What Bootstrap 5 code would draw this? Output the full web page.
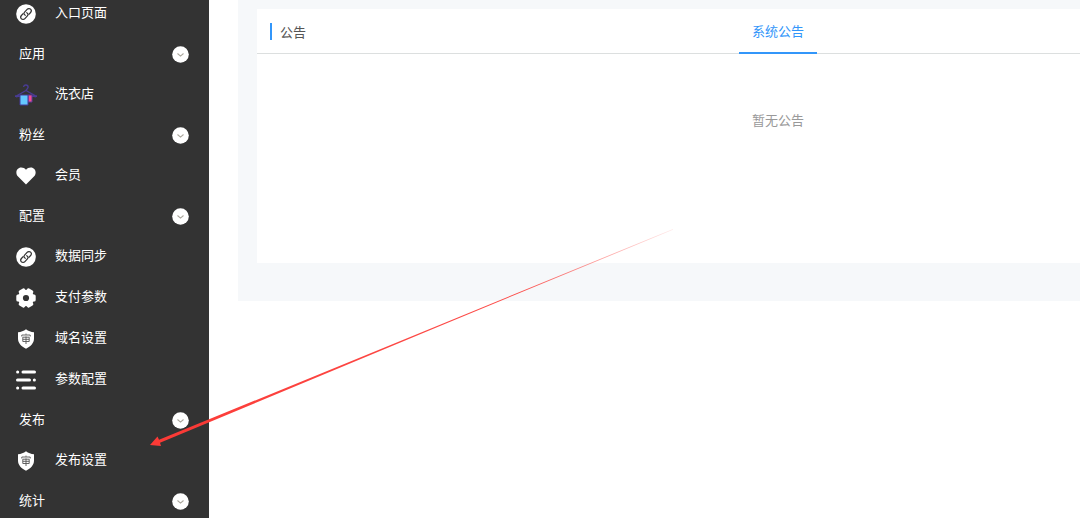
<!DOCTYPE html>
<html lang="zh-CN">
<head>
<meta charset="utf-8">
<meta name="viewport" content="width=device-width, initial-scale=1">
<title>系统公告</title>
<link rel="stylesheet" href="https://cdn.jsdelivr.net/npm/bootstrap@5.3.0/dist/css/bootstrap.min.css">
<style>
body { font: 13px/20px "Noto Sans CJK SC", sans-serif; color: #555; background: #fff; }
.side { width: 209px; background: #333; }
.side-menu { margin-top: -7px; }
.side-item { height: 41px; padding: 0 15px; gap: 18px; color: #fff; }
.side-item span { padding-bottom: 4px; }
.side-item:hover { color: #fff; }
.side-group { height: 40px; padding: 0 20px 0 19px; color: #fff; }
.side-group span { padding-bottom: 2px; }
.ico { width: 22px; height: 22px; flex: none; }
.ico-sm { width: 17px; height: 17px; flex: none; }
.panel { min-width: 1080px; margin-left: 29px; padding: 9px 19px 38px; background: #f6f8fa; }
.board { height: 254px; }
.board-head { height: 45px; border-bottom: 1px solid #dcdfdf; }
.board-title { left: 13px; padding-left: 8px; border-left: 2px solid #3296fa; line-height: 17px; }
.board-tab { height: 45px; padding: 0 13px; color: #3296fa; border-bottom: 2px solid #3296fa; }
.board-empty { padding-top: 56px; color: #999; }
.pointer { left: 140px; top: 220px; pointer-events: none; }
</style>
</head>
<body>
<svg class="d-none" aria-hidden="true">
  <symbol id="link" viewBox="0 0 22 22"><circle cx="11" cy="11" r="9.8" fill="#fff"/><g fill="none" stroke="#333" stroke-width="1.2" stroke-linecap="round"><path d="M10.300 12.300c-1.500-.6-1.700-2-.7-3.100l2.500-2.800c1-1.100 2.600-1.100 3.500-.2s.9 2.300 0 3.300l-1.700 1.900"/><path d="M11.700 9.700c1.500.6 1.700 2 .7 3.100l-2.500 2.800c-1 1.100-2.600 1.100-3.500.2s-.9-2.300 0-3.300l1.700-1.900"/></g></symbol>
  <symbol id="down" viewBox="0 0 17 17"><circle cx="8.5" cy="8.5" r="8.3" fill="#fff"/><path d="M5.5 7.5l3 2.600 3-2.600" fill="none" stroke="#aaa69c" stroke-width="1.1"/></symbol>
  <symbol id="hanger" viewBox="0 0 22 22"><path d="M8.600 3.100c0-3 4.800-2.700 4.500.2-.2 1.800-2.100 1.600-2.100 3.700M11 6.500L1 12.200h20L11 6.500M.2 11.500l2.200 1.800M21.800 11.500l-2.200 1.800" fill="none" stroke="#493c94" stroke-width="1.400"/><path d="M13 11h4v7h-4z" fill="#f94c91" stroke="#5a3b98"/><path d="M5 11h8v10H5z" fill="#65c8ff" stroke="#463b9b"/></symbol>
  <symbol id="heart" viewBox="0 0 22 22"><path d="M11 19.500L2.800 11.300C-.2 7.700 1.800 2.500 6.200 2.500c2 0 3.600.8 4.800 2.300 1.200-1.500 2.800-2.300 4.800-2.300 4.400 0 6.400 5.200 3.400 8.800z" fill="#fff"/></symbol>
  <symbol id="gear" viewBox="0 0 22 22"><g fill="#fff"><circle cx="11" cy="11" r="8.200"/><rect x="1.300" y="7.500" width="19.400" height="7" rx="1.500"/><rect x="1.300" y="7.500" width="19.400" height="7" rx="1.500" transform="rotate(60 11 11)"/><rect x="1.300" y="7.500" width="19.400" height="7" rx="1.500" transform="rotate(120 11 11)"/></g><circle cx="11" cy="11" r="3.100" fill="#333"/></symbol>
  <symbol id="shield" viewBox="0 0 22 22"><path d="M11 1.200c2.300 1.800 5.100 2.800 8 3v6.300c0 4.500-3.200 7.800-8 10.300-4.800-2.500-8-5.800-8-10.300V4.200c2.900-.2 5.700-1.200 8-3z" fill="#fff"/><path d="M11 5.600v1.200M6.800 8.500V7h8.400v1.500M7.800 9.200h6.400v4.300H7.800zM7.800 11.300h6.400M11 8.500v7.500" fill="none" stroke="#555" stroke-width=".9"/></symbol>
  <symbol id="list" viewBox="0 0 22 22"><g stroke="#fff" stroke-width="3" stroke-linecap="round"><path d="M2.600 3h.1M8 3h11.500M2.500 11h12M19.300 11h.1M2.600 19h.1M8 19h11.500"/></g></symbol>
</svg>
<div class="d-flex vh-100 overflow-hidden position-relative">
  <aside class="side flex-shrink-0 overflow-hidden">
    <nav class="side-menu d-flex flex-column">
      <a href="#" class="side-item d-flex align-items-center text-decoration-none"><svg class="ico"><use href="#link"/></svg><span>入口页面</span></a>
      <button type="button" class="side-group d-flex align-items-center justify-content-between border-0 bg-transparent"><span>应用</span><svg class="ico-sm"><use href="#down"/></svg></button>
      <a href="#" class="side-item d-flex align-items-center text-decoration-none"><svg class="ico"><use href="#hanger"/></svg><span>洗衣店</span></a>
      <button type="button" class="side-group d-flex align-items-center justify-content-between border-0 bg-transparent"><span>粉丝</span><svg class="ico-sm"><use href="#down"/></svg></button>
      <a href="#" class="side-item d-flex align-items-center text-decoration-none"><svg class="ico"><use href="#heart"/></svg><span>会员</span></a>
      <button type="button" class="side-group d-flex align-items-center justify-content-between border-0 bg-transparent"><span>配置</span><svg class="ico-sm"><use href="#down"/></svg></button>
      <a href="#" class="side-item d-flex align-items-center text-decoration-none"><svg class="ico"><use href="#link"/></svg><span>数据同步</span></a>
      <a href="#" class="side-item d-flex align-items-center text-decoration-none"><svg class="ico"><use href="#gear"/></svg><span>支付参数</span></a>
      <a href="#" class="side-item d-flex align-items-center text-decoration-none"><svg class="ico"><use href="#shield"/></svg><span>域名设置</span></a>
      <a href="#" class="side-item d-flex align-items-center text-decoration-none"><svg class="ico"><use href="#list"/></svg><span>参数配置</span></a>
      <button type="button" class="side-group d-flex align-items-center justify-content-between border-0 bg-transparent"><span>发布</span><svg class="ico-sm"><use href="#down"/></svg></button>
      <a href="#" class="side-item d-flex align-items-center text-decoration-none"><svg class="ico"><use href="#shield"/></svg><span>发布设置</span></a>
      <button type="button" class="side-group d-flex align-items-center justify-content-between border-0 bg-transparent"><span>统计</span><svg class="ico-sm"><use href="#down"/></svg></button>
    </nav>
  </aside>
  <main class="flex-grow-1 overflow-hidden">
    <div class="panel">
      <section class="board bg-white">
        <header class="board-head d-flex align-items-center justify-content-center position-relative">
          <div class="board-title position-absolute">公告</div>
          <a href="#" class="board-tab d-flex align-items-center text-decoration-none align-self-start">系统公告</a>
        </header>
        <div class="board-empty text-center">暂无公告</div>
      </section>
    </div>
  </main>
  <svg class="pointer position-absolute" width="540" height="240" viewBox="0 0 540 240" aria-hidden="true">
    <defs><linearGradient id="fade" gradientUnits="userSpaceOnUse" x1="10" y1="225" x2="534" y2="9"><stop offset="0" stop-color="#fc3a36"/><stop offset=".7" stop-color="#fc3a36" stop-opacity=".9"/><stop offset="1" stop-color="#fc3a36" stop-opacity=".1"/></linearGradient></defs>
    <path d="M10 225L17.500 216.500L19 219.800L300 104.700L533 9L533 9.800L300 105.900L20 222.800L21 226Z" fill="url(#fade)"/>
  </svg>
</div>
<script src="https://cdn.jsdelivr.net/npm/bootstrap@5.3.0/dist/js/bootstrap.bundle.min.js"></script>
</body>
</html>
